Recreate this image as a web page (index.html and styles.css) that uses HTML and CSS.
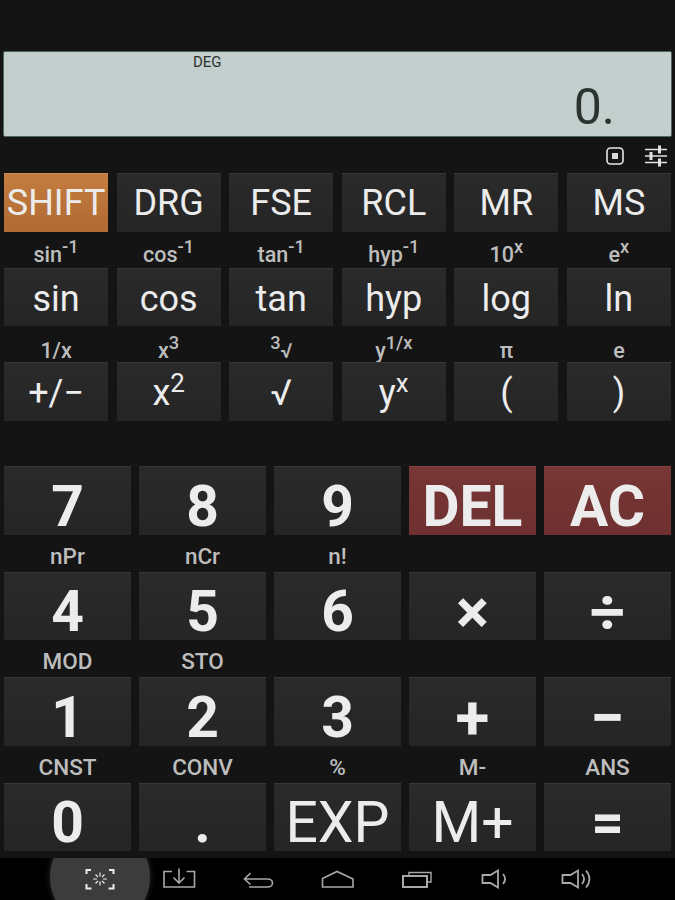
FILE: index.html
```html
<!DOCTYPE html>
<html lang="en">
<head>
<meta charset="UTF-8" />
<meta name="viewport" content="width=device-width, initial-scale=1" />
<title>Calculator</title>
<link rel="stylesheet" href="styles.css">
</head>
<body>
  <div class="app">
    <div class="display">
      <span class="deg">DEG</span>
      <span class="value">0.</span>
    </div>

    <div class="tools">
      <svg class="tool" width="20" height="20" viewBox="0 0 20 20">
        <rect x="2" y="2" width="16" height="16" rx="3.5" fill="none" stroke="#e8e8e8" stroke-width="1.6"/>
        <rect x="7" y="7" width="6" height="6" fill="#d8d8d8"/>
      </svg>
      <svg class="tool" width="24" height="24" viewBox="0 0 24 24">
        <g stroke="#e0e0e0" fill="none">
          <path d="M1 5.500h22M1 12h22M1 18.500h22" stroke-width="1.500"/>
          <path d="M15.500 1.500v8M7 8v8M15.500 14.500v8" stroke-width="3"/>
        </g>
      </svg>
    </div>

    <div class="grid six">
      <button class="key small shift">SHIFT</button>
      <button class="key small">DRG</button>
      <button class="key small">FSE</button>
      <button class="key small">RCL</button>
      <button class="key small">MR</button>
      <button class="key small">MS</button>
    </div>

    <div class="grid six labels">
      <span>sin<sup>-1</sup></span>
      <span>cos<sup>-1</sup></span>
      <span>tan<sup>-1</sup></span>
      <span>hyp<sup>-1</sup></span>
      <span>10<sup>x</sup></span>
      <span>e<sup>x</sup></span>
    </div>
    <div class="grid six lower">
      <button class="key small">sin</button>
      <button class="key small">cos</button>
      <button class="key small">tan</button>
      <button class="key small">hyp</button>
      <button class="key small">log</button>
      <button class="key small">ln</button>
    </div>

    <div class="grid six labels near">
      <span>1/x</span>
      <span>x<sup>3</sup></span>
      <span><sup>3</sup><small>√</small></span>
      <span>y<sup>1/x</sup></span>
      <span>π</span>
      <span>e</span>
    </div>
    <div class="grid six lower">
      <button class="key small">+/−</button>
      <button class="key small">x<sup>2</sup></button>
      <button class="key small">√</button>
      <button class="key small">y<sup>x</sup></button>
      <button class="key small">(</button>
      <button class="key small">)</button>
    </div>

    <div class="grid five first">
      <button class="key big">7</button>
      <button class="key big">8</button>
      <button class="key big">9</button>
      <button class="key big red">DEL</button>
      <button class="key big red">AC</button>
    </div>

    <div class="grid five labels tall">
      <span>nPr</span>
      <span>nCr</span>
      <span>n!</span>
      <span></span>
      <span></span>
    </div>
    <div class="grid five">
      <button class="key big">4</button>
      <button class="key big">5</button>
      <button class="key big">6</button>
      <button class="key big op">×</button>
      <button class="key big op">÷</button>
    </div>

    <div class="grid five labels tall">
      <span>MOD</span>
      <span>STO</span>
      <span></span>
      <span></span>
      <span></span>
    </div>
    <div class="grid five">
      <button class="key big">1</button>
      <button class="key big">2</button>
      <button class="key big">3</button>
      <button class="key big op">+</button>
      <button class="key big op">−</button>
    </div>

    <div class="grid five labels tall">
      <span>CNST</span>
      <span>CONV</span>
      <span>%</span>
      <span>M-</span>
      <span>ANS</span>
    </div>
    <div class="grid five">
      <button class="key big">0</button>
      <button class="key big">.</button>
      <button class="key big thin">EXP</button>
      <button class="key big thin">M+</button>
      <button class="key big">=</button>
    </div>
  </div>

  <nav class="navbar">
    <div class="slot active">
      <svg width="30" height="22" viewBox="0 0 30 22">
        <g fill="none" stroke="#ececec" stroke-width="2">
          <path d="M6 2H1.500V6M24 2h4.500V6M1.500 16v4.500H6.500M28.500 16v4.500H23.500"/>
          <path d="M15 4.500v4M15 13.500v4M8 11h4M18 11h4M10.500 6.500l2.500 2.500M19.500 6.500L17 9M10.500 15.500l2.500-2.500M19.500 15.500L17 13" stroke-width="1.200"/>
        </g>
      </svg>
    </div>
    <div class="slot">
      <svg width="34" height="22" viewBox="0 0 34 22">
        <g fill="none" stroke="#a8a8a8" stroke-width="1.600">
          <path d="M10 3.500H2V19H32.500V3.500H24.500"/>
          <path d="M17 0.500V15M11.500 9.500L17 15l5.500-5.500"/>
        </g>
      </svg>
    </div>
    <div class="slot">
      <svg width="32" height="20" viewBox="0 0 32 20">
        <path d="M8.500 4L2.500 10l6 5.500M2.500 10H25.500c3 0 5 1.800 5 4s-2 4-5 4H7" fill="none" stroke="#a8a8a8" stroke-width="1.600"/>
      </svg>
    </div>
    <div class="slot">
      <svg width="34" height="18" viewBox="0 0 34 18">
        <path d="M2.500 17V8.500L17 1.500 33 9v8z" fill="none" stroke="#a8a8a8" stroke-width="1.600"/>
      </svg>
    </div>
    <div class="slot">
      <svg width="32" height="18" viewBox="0 0 32 18">
        <g fill="none" stroke="#a8a8a8">
          <rect x="3" y="6" width="24" height="11" stroke-width="2"/>
          <path d="M9 6V2.500H31V12H27" stroke-width="1.400"/>
        </g>
      </svg>
    </div>
    <div class="slot">
      <svg width="28" height="20" viewBox="0 0 28 20">
        <path d="M1.500 6h8L17 1.500v17L9.500 14h-8z" fill="none" stroke="#a8a8a8" stroke-width="1.800"/>
        <path d="M22 5c2.500 3 2.500 7 0 10" fill="none" stroke="#a8a8a8" stroke-width="1.800"/>
      </svg>
    </div>
    <div class="slot vol-up">
      <svg width="32" height="22" viewBox="0 0 32 22">
        <path d="M1.500 7h8L17 2.500v17L9.500 15h-8z" fill="none" stroke="#a8a8a8" stroke-width="1.800"/>
        <path d="M21 6c2.500 3 2.500 7 0 10M25 2.500c4.500 5 4.500 12 0 17" fill="none" stroke="#a8a8a8" stroke-width="1.800"/>
      </svg>
    </div>
  </nav>
</body>
</html>
```

FILE: styles.css
```css
html, body {
  margin: 0;
  padding: 0;
}
body {
  width: 675px;
  height: 900px;
  overflow: hidden;
  background: #141414;
  font-family: Roboto, 'Liberation Sans', sans-serif;
  display: flex;
  flex-direction: column;
}
.app {
  flex: 1;
  padding: 51px 4px 0;
}
/* display */
.display {
  display: flex;
  justify-content: flex-end;
  align-items: flex-end;
  position: relative;
  height: 86px;
  margin: 0 -1px;
  box-sizing: border-box;
  background: #c2cfcc;
  border: 1px solid #4d6663;
  border-radius: 2px;
  color: #2b3331;
}
.deg {
  position: absolute;
  left: 189px;
  top: 2px;
  font-size: 15px;
  line-height: 16px;
}
.value {
  font-size: 50px;
  line-height: 58px;
  padding: 0 56px 0 0;
}
.tools {
  display: flex;
  justify-content: flex-end;
  align-items: center;
  gap: 19px;
  height: 36px;
  padding: 2px 3px 0 0;
  box-sizing: border-box;
}
/* keys */
.grid {
  display: grid;
  gap: 8px;
}
.six {
  grid-template-columns: repeat(6, 1fr);
  column-gap: 8.4px;
}
.five {
  grid-template-columns: repeat(5, 1fr);
}
.first {
  margin-top: 45.500px;
}
.key {
  padding: 0;
  border: none;
  border-top: 1px solid #373737;
  color: #ececec;
  background: linear-gradient(#2a2a2a, #252525);
  font-family: inherit;
  white-space: nowrap;
}
.small {
  height: 58.500px;
  font-size: 36px;
}
.lower .key {
  padding-top: 3px;
}
.big {
  height: 68.500px;
  padding-top: 12px;
  font-size: 57px;
  line-height: 50px;
  font-weight: 700;
}
.op {
  font-size: 62px;
}
.thin {
  font-weight: 400;
  font-size: 57px;
}
.shift {
  background: linear-gradient(#c47d3f, #b06a33);
  border-top-color: #c98a50;
}
.red {
  background: linear-gradient(#783636, #6e3030);
  border-top-color: #864040;
}
.key sup {
  font-size: 0.72em;
  line-height: 0;
  vertical-align: 0.5em;
}
/* second function labels */
.labels {
  height: 34px;
  margin-bottom: 2px;
  overflow: hidden;
  align-items: end;
  text-align: center;
  color: #bdbdbd;
  font-size: 21.500px;
  font-weight: 500;
  line-height: 22px;
}
.near {
  overflow: visible;
}
.near span {
  margin-bottom: -2px;
}
.labels sup {
  font-size: 0.85em;
  line-height: 0;
  vertical-align: 0.5em;
}
.labels small {
  font-size: 0.95em;
}
.tall {
  height: 37px;
  margin-bottom: 0;
  line-height: 32px;
  font-size: 22.500px;
}
/* system bar */
.navbar {
  display: flex;
  height: 42px;
  padding-left: 60px;
  background: #000;
  overflow: hidden;
}
.slot {
  position: relative;
  display: flex;
  align-items: center;
  justify-content: center;
  width: 79px;
}
.slot svg {
  position: relative;
}
.vol-up {
  padding-left: 3px;
}
.active::before {
  content: "";
  position: absolute;
  left: -10px;
  top: -31px;
  width: 100px;
  height: 100px;
  border-radius: 50%;
  background: #3c3c3c;
  box-shadow: 0 0 6px #2a2a2a;
}
```
